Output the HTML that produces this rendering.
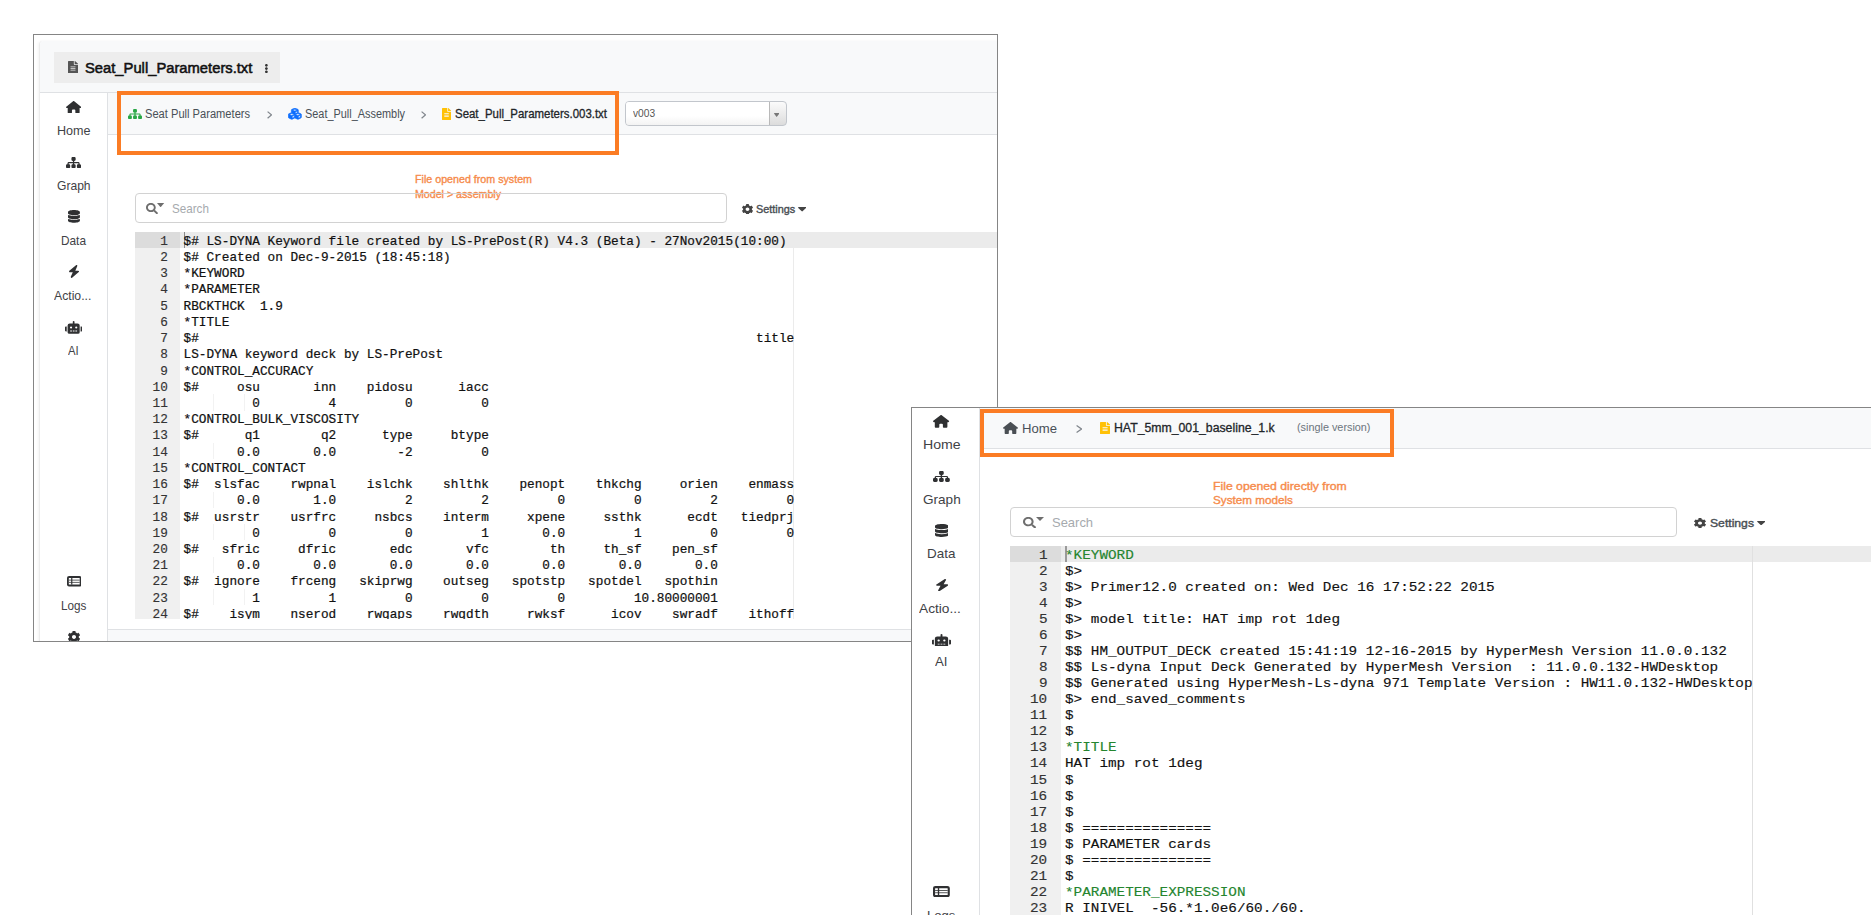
<!DOCTYPE html>
<html lang="en"><head><meta charset="utf-8"><title>File viewer breadcrumbs</title>
<style>
html,body{margin:0;padding:0;background:#fff}
body{position:relative;width:1871px;height:915px;overflow:hidden;font-kerning:none;-webkit-font-smoothing:antialiased}
body div,body svg,body span.t{position:absolute;display:block;box-sizing:border-box}
span.t{white-space:pre;transform-origin:0 50%}
.clip{overflow:hidden}
</style></head><body>
<div style="left:33px;top:34px;width:965px;height:608px;border:1px solid #858585;background:#fff"></div>
<div class="clip" style="left:34px;top:35px;width:963px;height:606px;">
<div style="left:5px;top:6px;width:961px;height:601px;background:#fff;box-shadow:-1px 0 3px rgba(0,0,0,.05);border-radius:4px 0 0 0;border-left:1px solid #ebebeb"></div>
<div style="left:6px;top:6px;width:960px;height:51px;background:#f8f9fa;border-radius:4px 0 0 0"></div>
<div style="left:6px;top:57px;width:960px;height:1px;background:#dfe1e4"></div>
<div style="left:20px;top:17px;width:226px;height:31px;background:#ededed"></div>
<svg style="left:33.8px;top:25.8px;" width="10" height="12.6" viewBox="0 0 384 512" preserveAspectRatio="none"><path fill="#555" d="M224 136V0H24C10.7 0 0 10.7 0 24v464c0 13.3 10.7 24 24 24h336c13.3 0 24-10.700 24-24V160H248c-13.200 0-24-10.800-24-24zm64 236c0 6.600-5.400 12-12 12H108c-6.600 0-12-5.400-12-12v-8c0-6.600 5.400-12 12-12h168c6.600 0 12 5.400 12 12v8zm0-64c0 6.600-5.400 12-12 12H108c-6.600 0-12-5.400-12-12v-8c0-6.600 5.400-12 12-12h168c6.600 0 12 5.400 12 12v8zm0-72v8c0 6.600-5.400 12-12 12H108c-6.600 0-12-5.400-12-12v-8c0-6.600 5.400-12 12-12h168c6.600 0 12 5.400 12 12zm96-114.100v6.100H256V0h6.100c6.400 0 12.500 2.500 17 7l97.900 98c4.500 4.500 7 10.600 7 16.900z"/></svg>
<span class="t" style="left:50.70px;top:23px;font:15.2px/20px 'Liberation Sans',sans-serif;color:#111;transform:scaleX(0.9718);-webkit-text-stroke:.55px #111;">Seat_Pull_Parameters.txt</span>
<svg style="left:230.9px;top:29.2px;" width="2.8" height="9.2" viewBox="24 8 144 496" preserveAspectRatio="none"><path fill="#333" d="M96 184c39.800 0 72 32.200 72 72s-32.200 72-72 72-72-32.200-72-72 32.200-72 72-72zM24 80c0 39.800 32.200 72 72 72s72-32.200 72-72S135.800 8 96 8 24 40.200 24 80zm0 352c0 39.800 32.200 72 72 72s72-32.200 72-72-32.200-72-72-72-72 32.200-72 72z"/></svg>
<div style="left:6px;top:58px;width:67px;height:549px;background:#fff"></div>
<div style="left:73px;top:58px;width:1px;height:549px;background:#dfe1e4"></div>
<svg style="left:31.9px;top:65.6px;" width="15.3" height="12.5" viewBox="0 0 576 512" preserveAspectRatio="none"><path fill="#2f3032" d="M575.8 255.5c0 18-15 32.1-32 32.1h-32l.7 160.2c0 2.7-.2 5.4-.5 8.100V472c0 22.100-17.900 40-40 40H456c-1.100 0-2.200 0-3.300-.100c-1.400 .100-2.800 .100-4.200 .100H416 392c-22.100 0-40-17.900-40-40V448 384c0-17.700-14.300-32-32-32H256c-17.700 0-32 14.300-32 32v64 24c0 22.100-17.900 40-40 40H160 128.100c-1.500 0-3-.100-4.500-.200c-1.200 .100-2.400 .200-3.600 .200H104c-22.100 0-40-17.900-40-40V360c0-.900 0-1.900 .100-2.800V287.600H32c-18 0-32-14-32-32.100c0-9 3-17 10-24L266.400 8c7-7 15-8 22-8s15 2 21 7L564.800 231.500c8 7 12 15 11 24z"/></svg>
<span class="t" style="left:22.70px;top:86px;font:13px/20px 'Liberation Sans',sans-serif;color:#3f4246;transform:scaleX(0.9680);">Home</span>
<svg style="left:31.9px;top:121.6px;" width="15.1" height="11.3" viewBox="0 32 576 448" preserveAspectRatio="none"><path fill="#2f3032" d="M208 80c0-26.5 21.5-48 48-48h64c26.5 0 48 21.5 48 48v64c0 26.500-21.500 48-48 48h-8v40H464c30.900 0 56 25.100 56 56v32h8c26.500 0 48 21.500 48 48v64c0 26.500-21.500 48-48 48H464c-26.500 0-48-21.500-48-48V368c0-26.500 21.500-48 48-48h8V288c0-4.400-3.600-8-8-8H312v40h8c26.500 0 48 21.500 48 48v64c0 26.500-21.500 48-48 48H256c-26.500 0-48-21.500-48-48V368c0-26.500 21.500-48 48-48h8V280H112c-4.400 0-8 3.600-8 8v32h8c26.500 0 48 21.500 48 48v64c0 26.500-21.500 48-48 48H48c-26.500 0-48-21.500-48-48V368c0-26.500 21.500-48 48-48h8V288c0-30.900 25.100-56 56-56H264V192h-8c-26.500 0-48-21.500-48-48V80z"/></svg>
<span class="t" style="left:22.70px;top:141px;font:13px/20px 'Liberation Sans',sans-serif;color:#3f4246;transform:scaleX(0.9297);">Graph</span>
<svg style="left:33.7px;top:174.9px;" width="11.9" height="12.8" viewBox="0 0 448 512" preserveAspectRatio="none"><path fill="#2f3032" d="M448 80v48c0 44.2-100.3 80-224 80S0 172.2 0 128V80C0 35.8 100.3 0 224 0S448 35.800 448 80zM393.200 214.700c20.800-7.400 39.900-16.900 54.800-28.600V288c0 44.200-100.300 80-224 80S0 332.200 0 288V186.100c14.900 11.800 34 21.200 54.800 28.600C99.700 230.700 159.500 240 224 240s124.300-9.300 169.200-25.300zM0 346.100c14.900 11.800 34 21.200 54.800 28.600C99.700 390.700 159.500 400 224 400s124.300-9.300 169.200-25.300c20.800-7.400 39.900-16.900 54.800-28.600V432c0 44.200-100.300 80-224 80S0 476.200 0 432V346.100z"/></svg>
<span class="t" style="left:27.00px;top:196px;font:13px/20px 'Liberation Sans',sans-serif;color:#3f4246;transform:scaleX(0.9093);">Data</span>
<svg style="left:34.7px;top:230.4px;" width="10.1" height="12.9" viewBox="30 0 388 512" preserveAspectRatio="none"><path fill="#2f3032" d="M349.4 44.6c5.9-13.7 1.5-29.7-10.6-38.5s-28.600-8-39.900 1.800l-256 224c-10 8.800-13.600 22.900-8.900 35.300S50.700 288 64 288H175.500L98.600 467.400c-5.900 13.700-1.500 29.700 10.600 38.500s28.600 8 39.900-1.800l256-224c10-8.800 13.600-22.900 8.900-35.300s-16.600-20.700-30-20.700H272.500L349.400 44.600z"/></svg>
<span class="t" style="left:20.05px;top:251px;font:13px/20px 'Liberation Sans',sans-serif;color:#3f4246;transform:scaleX(0.9392);">Actio...</span>
<svg style="left:31px;top:285.8px;" width="17.3" height="12.8" viewBox="0 0 640 512" preserveAspectRatio="none"><path fill="#2f3032" d="M32,224H64V416H32A31.962,31.962,0,0,1,0,384V256A31.962,31.962,0,0,1,32,224Zm512-48V448a64.063,64.063,0,0,1-64,64H160a64.063,64.063,0,0,1-64-64V176a79.974,79.974,0,0,1,80-80H288V32a32,32,0,0,1,64,0V96H464A79.974,79.974,0,0,1,544,176ZM264,256a40,40,0,1,0-40,40A39.997,39.997,0,0,0,264,256Zm-8,128H192v32h64Zm96,0H288v32h64ZM456,256a40,40,0,1,0-40,40A39.997,39.997,0,0,0,456,256Zm-8,128H384v32h64ZM640,256V384a31.962,31.962,0,0,1-32,32H576V224h32A31.962,31.962,0,0,1,640,256Z"/></svg>
<span class="t" style="left:34.00px;top:306px;font:13px/20px 'Liberation Sans',sans-serif;color:#3f4246;transform:scaleX(0.8710);">AI</span>
<svg style="left:32.5px;top:541.4px" width="14.5" height="10.4" viewBox="0 0 32 24" preserveAspectRatio="none"><rect x="0" y="0" width="32" height="24" rx="4.5" fill="#2f3032"/><rect x="4" y="4.6" width="24" height="14.8" rx="0.6" fill="#fff"/><g fill="#2f3032"><rect x="9.2" y="4" width="2.6" height="16"/><rect x="4" y="8.6" width="24" height="1.7"/><rect x="4" y="13.7" width="24" height="1.700"/></g></svg>
<span class="t" style="left:26.80px;top:561px;font:13px/20px 'Liberation Sans',sans-serif;color:#3f4246;transform:scaleX(0.9004);">Logs</span>
<svg style="left:33.6px;top:595.8px;" width="12" height="12" viewBox="19 8 474 496" preserveAspectRatio="none"><path fill="#2f3032" d="M487.4 315.7l-42.6-24.6c4.3-23.2 4.3-47 0-70.2l42.6-24.6c4.9-2.8 7.1-8.6 5.5-14-11.1-35.6-30-67.8-54.700-94.600-3.800-4.100-10-5.100-14.800-2.300L380.800 110c-17.900-15.400-38.500-27.300-60.800-35.100V25.800c0-5.600-3.900-10.500-9.400-11.700-36.700-8.200-74.300-7.800-109.200 0-5.500 1.200-9.400 6.100-9.400 11.700V75c-22.200 7.900-42.800 19.800-60.800 35.100L88.700 85.500c-4.900-2.800-11-1.900-14.800 2.300-24.700 26.700-43.600 58.900-54.700 94.600-1.700 5.400.6 11.200 5.500 14L67.300 221c-4.300 23.200-4.300 47 0 70.200l-42.6 24.600c-4.900 2.800-7.100 8.600-5.500 14 11.100 35.600 30 67.800 54.700 94.600 3.800 4.100 10 5.100 14.800 2.300l42.600-24.600c17.900 15.400 38.500 27.300 60.800 35.100v49.200c0 5.600 3.900 10.500 9.400 11.700 36.700 8.200 74.300 7.800 109.200 0 5.500-1.200 9.400-6.100 9.400-11.700v-49.200c22.200-7.900 42.800-19.800 60.800-35.100l42.600 24.600c4.900 2.800 11 1.900 14.800-2.300 24.700-26.700 43.600-58.900 54.700-94.600 1.500-5.500-.7-11.300-5.600-14.100zM256 336c-44.100 0-80-35.900-80-80s35.900-80 80-80 80 35.900 80 80-35.900 80-80 80z"/></svg>
<div style="left:74px;top:58px;width:892px;height:41px;background:#f8f9fa"></div>
<div style="left:74px;top:99px;width:892px;height:1px;background:#dfe1e4"></div>
<svg style="left:94.1px;top:73.6px;" width="14" height="10" viewBox="0 32 576 448" preserveAspectRatio="none"><path fill="#28a745" d="M208 80c0-26.5 21.5-48 48-48h64c26.5 0 48 21.5 48 48v64c0 26.500-21.500 48-48 48h-8v40H464c30.900 0 56 25.100 56 56v32h8c26.500 0 48 21.500 48 48v64c0 26.500-21.500 48-48 48H464c-26.500 0-48-21.500-48-48V368c0-26.500 21.500-48 48-48h8V288c0-4.400-3.600-8-8-8H312v40h8c26.500 0 48 21.500 48 48v64c0 26.500-21.500 48-48 48H256c-26.500 0-48-21.500-48-48V368c0-26.500 21.500-48 48-48h8V280H112c-4.400 0-8 3.600-8 8v32h8c26.500 0 48 21.500 48 48v64c0 26.500-21.500 48-48 48H48c-26.500 0-48-21.500-48-48V368c0-26.500 21.500-48 48-48h8V288c0-30.900 25.100-56 56-56H264V192h-8c-26.500 0-48-21.500-48-48V80z"/></svg>
<span class="t" style="left:111.10px;top:69px;font:12.5px/20px 'Liberation Sans',sans-serif;color:#495057;transform:scaleX(0.8897);">Seat Pull Parameters</span>
<svg style="left:233px;top:76px" width="5.2" height="7.8" viewBox="0 0 5.2 7.8"><polyline points="0.6,0.6 4.4,3.9 0.6,7.2" fill="none" stroke="#80868c" stroke-width="1.25"/></svg>
<svg style="left:254.3px;top:73px;" width="13.7" height="11.6" viewBox="-13 19 538 474" preserveAspectRatio="none"><path fill="#0d6efd" stroke="#0d6efd" stroke-width="26" stroke-linejoin="round" d="M488.6 250.2L392 214V105.5c0-15-9.300-28.400-23.400-33.700l-100-37.500c-8.100-3.100-17.100-3.100-25.300 0l-100 37.500c-14.100 5.300-23.400 18.700-23.400 33.700V214l-96.600 36.200C9.300 255.500 0 268.900 0 283.900V394c0 13.600 7.700 26.100 19.900 32.200l100 50c10.100 5.100 22.100 5.100 32.200 0l103.900-52 103.900 52c10.100 5.100 22.100 5.100 32.200 0l100-50c12.200-6.100 19.900-18.600 19.900-32.200V283.900c0-15-9.300-28.400-23.400-33.700zM358 214.800l-85 31.900v-68.200l85-37v73.300zM154 104.100l102-38.200 102 38.200v.6l-102 41.400-102-41.400v-.6zm84 291.100l-85 42.500v-79.100l85-38.800v75.400zm0-112l-102 41.400-102-41.400v-.6l102-38.200 102 38.200v.6zm240 112l-85 42.500v-79.100l85-38.800v75.400zm0-112l-102 41.400-102-41.400v-.6l102-38.200 102 38.200v.6z"/></svg>
<span class="t" style="left:270.70px;top:69px;font:12.5px/20px 'Liberation Sans',sans-serif;color:#495057;transform:scaleX(0.8724);">Seat_Pull_Assembly</span>
<svg style="left:387.2px;top:76px" width="5.2" height="7.8" viewBox="0 0 5.2 7.8"><polyline points="0.6,0.6 4.4,3.9 0.6,7.2" fill="none" stroke="#80868c" stroke-width="1.25"/></svg>
<svg style="left:408.3px;top:72.7px;" width="9.1" height="12.1" viewBox="0 0 384 512" preserveAspectRatio="none"><path fill="#ffc107" d="M224 136V0H24C10.7 0 0 10.7 0 24v464c0 13.3 10.7 24 24 24h336c13.3 0 24-10.700 24-24V160H248c-13.200 0-24-10.800-24-24zm64 236c0 6.600-5.400 12-12 12H108c-6.600 0-12-5.400-12-12v-8c0-6.600 5.400-12 12-12h168c6.600 0 12 5.400 12 12v8zm0-64c0 6.600-5.400 12-12 12H108c-6.600 0-12-5.400-12-12v-8c0-6.600 5.400-12 12-12h168c6.600 0 12 5.400 12 12v8zm0-72v8c0 6.600-5.400 12-12 12H108c-6.600 0-12-5.400-12-12v-8c0-6.600 5.400-12 12-12h168c6.600 0 12 5.400 12 12zm96-114.100v6.100H256V0h6.100c6.400 0 12.500 2.500 17 7l97.900 98c4.500 4.500 7 10.600 7 16.900z"/></svg>
<span class="t" style="left:420.50px;top:69px;font:12.5px/20px 'Liberation Sans',sans-serif;color:#212529;transform:scaleX(0.9153);-webkit-text-stroke:.3px #212529;">Seat_Pull_Parameters.003.txt</span>
<div style="left:591px;top:66.4px;width:162px;height:24.6px;border:1px solid #c2c6cc;border-radius:4px;background:linear-gradient(#fbfbfb,#dcdcdc)"></div>
<div style="left:592px;top:67.4px;width:143px;height:22.6px;background:linear-gradient(#fff 60%,#f3f3f3);border-radius:3px 0 0 3px"></div>
<div style="left:734.5px;top:67.4px;width:1px;height:22.6px;background:#b9b9b9"></div>
<span class="t" style="left:599.30px;top:68px;font:11.5px/20px 'Liberation Sans',sans-serif;color:#555;transform:scaleX(0.8856);">v003</span>
<svg style="left:740.1px;top:78.4px;" width="5.3" height="4" viewBox="8 192 304 169" preserveAspectRatio="none"><path fill="#777" d="M31.3 192h257.300c17.800 0 26.700 21.500 14.100 34.100L174.100 354.800c-7.800 7.800-20.500 7.800-28.300 0L17.200 226.100C4.600 213.500 13.500 192 31.300 192z"/></svg>
<span class="t" style="left:381.30px;top:134px;font:10.5px/20px 'Liberation Sans',sans-serif;color:#f68b4b;transform:scaleX(1.0176);-webkit-text-stroke:.35px #f68b4b;">File opened from system</span>
<span class="t" style="left:381.30px;top:149px;font:10.5px/20px 'Liberation Sans',sans-serif;color:#f68b4b;transform:scaleX(1.0130);-webkit-text-stroke:.35px #f68b4b;">Model &gt; assembly</span>
<div style="left:101px;top:158px;width:592px;height:30px;border:1px solid #d2d2d2;border-radius:4px;background:transparent"></div>
<svg style="left:112px;top:167.8px;" width="12" height="11.2" viewBox="0 0 512 512" preserveAspectRatio="none"><path fill="#6e6e6e" d="M505 442.7L405.3 343c-4.500-4.500-10.600-7-17-7H372c27.600-35.300 44-79.700 44-128C416 93.100 322.900 0 208 0S0 93.100 0 208s93.100 208 208 208c48.300 0 92.700-16.400 128-44v16.300c0 6.400 2.500 12.500 7 17l99.700 99.700c9.400 9.400 24.600 9.400 33.900 0l28.300-28.300c9.400-9.400 9.400-24.600.1-34zM208 336c-70.700 0-128-57.200-128-128 0-70.700 57.200-128 128-128 70.700 0 128 57.200 128 128 0 70.700-57.200 128-128 128z"/></svg>
<svg style="left:123.4px;top:168px;" width="7.2" height="4.3" viewBox="0 0 10 6" preserveAspectRatio="none"><path fill="#6e6e6e" d="M0 0H10L5 6z"/></svg>
<span class="t" style="left:137.90px;top:164px;font:13px/20px 'Liberation Sans',sans-serif;color:#a6aaae;transform:scaleX(0.8954);">Search</span>
<svg style="left:707.6px;top:168.6px;" width="11" height="10.6" viewBox="19 8 474 496" preserveAspectRatio="none"><path fill="#444" d="M487.4 315.7l-42.6-24.6c4.3-23.2 4.3-47 0-70.2l42.6-24.6c4.9-2.8 7.1-8.6 5.5-14-11.1-35.6-30-67.8-54.700-94.600-3.800-4.100-10-5.100-14.800-2.300L380.800 110c-17.900-15.400-38.500-27.300-60.800-35.100V25.800c0-5.600-3.900-10.500-9.400-11.700-36.700-8.200-74.300-7.800-109.200 0-5.500 1.200-9.400 6.100-9.400 11.700V75c-22.200 7.900-42.800 19.800-60.800 35.100L88.700 85.500c-4.900-2.800-11-1.900-14.800 2.300-24.700 26.700-43.600 58.900-54.700 94.600-1.700 5.400.6 11.200 5.500 14L67.300 221c-4.300 23.200-4.300 47 0 70.200l-42.6 24.600c-4.900 2.800-7.100 8.600-5.500 14 11.100 35.600 30 67.800 54.700 94.600 3.800 4.100 10 5.100 14.800 2.300l42.600-24.600c17.900 15.400 38.500 27.300 60.800 35.100v49.200c0 5.600 3.900 10.500 9.400 11.700 36.700 8.200 74.300 7.800 109.200 0 5.500-1.200 9.400-6.100 9.400-11.700v-49.200c22.200-7.900 42.800-19.800 60.800-35.100l42.600 24.600c4.900 2.800 11 1.900 14.800-2.300 24.700-26.700 43.600-58.900 54.700-94.600 1.500-5.500-.7-11.300-5.600-14.100zM256 336c-44.100 0-80-35.900-80-80s35.900-80 80-80 80 35.900 80 80-35.900 80-80 80z"/></svg>
<span class="t" style="left:721.80px;top:164px;font:11px/20px 'Liberation Sans',sans-serif;color:#4a4f54;transform:scaleX(0.9858);-webkit-text-stroke:.4px #4a4f54;">Settings</span>
<svg style="left:763.5px;top:172px;" width="8.3" height="4.5" viewBox="8 192 304 169" preserveAspectRatio="none"><path fill="#444" d="M31.3 192h257.300c17.800 0 26.700 21.500 14.100 34.100L174.100 354.800c-7.800 7.800-20.500 7.800-28.300 0L17.200 226.100C4.600 213.500 13.500 192 31.300 192z"/></svg>
<div class="clip" style="left:101px;top:197px;width:865px;height:386.5px;">
<div style="left:0px;top:0px;width:44.5px;height:400px;background:#f0f0f0"></div>
<div style="left:0px;top:0.2px;width:44.5px;height:16.22px;background:#dcdcdc"></div>
<div style="left:44.5px;top:0.2px;width:820px;height:16.22px;background:#ebebeb"></div>
<div style="left:658px;top:0px;width:1px;height:400px;background:#ebebeb"></div>
<div style="left:49px;top:0.2px;width:1px;height:16.22px;background:#8a8a8a"></div>
<span class="t" style="left:25.16px;top:0px;font:12.7292px/20px 'Liberation Mono',monospace;color:#333;-webkit-text-stroke:.15px #333;">1</span>
<span class="t" style="left:48.60px;top:0px;font:12.7292px/20px 'Liberation Mono',monospace;color:#111;-webkit-text-stroke:.22px #111;">$# LS-DYNA Keyword file created by LS-PrePost(R) V4.3 (Beta) - 27Nov2015(10:00)</span>
<span class="t" style="left:25.16px;top:16px;font:12.7292px/20px 'Liberation Mono',monospace;color:#333;-webkit-text-stroke:.15px #333;">2</span>
<span class="t" style="left:48.60px;top:16px;font:12.7292px/20px 'Liberation Mono',monospace;color:#111;-webkit-text-stroke:.22px #111;">$# Created on Dec-9-2015 (18:45:18)</span>
<span class="t" style="left:25.16px;top:32px;font:12.7292px/20px 'Liberation Mono',monospace;color:#333;-webkit-text-stroke:.15px #333;">3</span>
<span class="t" style="left:48.60px;top:32px;font:12.7292px/20px 'Liberation Mono',monospace;color:#111;-webkit-text-stroke:.22px #111;">*KEYWORD</span>
<span class="t" style="left:25.16px;top:48px;font:12.7292px/20px 'Liberation Mono',monospace;color:#333;-webkit-text-stroke:.15px #333;">4</span>
<span class="t" style="left:48.60px;top:48px;font:12.7292px/20px 'Liberation Mono',monospace;color:#111;-webkit-text-stroke:.22px #111;">*PARAMETER</span>
<span class="t" style="left:25.16px;top:65px;font:12.7292px/20px 'Liberation Mono',monospace;color:#333;-webkit-text-stroke:.15px #333;">5</span>
<span class="t" style="left:48.60px;top:65px;font:12.7292px/20px 'Liberation Mono',monospace;color:#111;-webkit-text-stroke:.22px #111;">RBCKTHCK  1.9</span>
<span class="t" style="left:25.16px;top:81px;font:12.7292px/20px 'Liberation Mono',monospace;color:#333;-webkit-text-stroke:.15px #333;">6</span>
<span class="t" style="left:48.60px;top:81px;font:12.7292px/20px 'Liberation Mono',monospace;color:#111;-webkit-text-stroke:.22px #111;">*TITLE</span>
<span class="t" style="left:25.16px;top:97px;font:12.7292px/20px 'Liberation Mono',monospace;color:#333;-webkit-text-stroke:.15px #333;">7</span>
<span class="t" style="left:48.60px;top:97px;font:12.7292px/20px 'Liberation Mono',monospace;color:#111;-webkit-text-stroke:.22px #111;">$#                                                                         title</span>
<span class="t" style="left:25.16px;top:113px;font:12.7292px/20px 'Liberation Mono',monospace;color:#333;-webkit-text-stroke:.15px #333;">8</span>
<span class="t" style="left:48.60px;top:113px;font:12.7292px/20px 'Liberation Mono',monospace;color:#111;-webkit-text-stroke:.22px #111;">LS-DYNA keyword deck by LS-PrePost</span>
<span class="t" style="left:25.16px;top:130px;font:12.7292px/20px 'Liberation Mono',monospace;color:#333;-webkit-text-stroke:.15px #333;">9</span>
<span class="t" style="left:48.60px;top:130px;font:12.7292px/20px 'Liberation Mono',monospace;color:#111;-webkit-text-stroke:.22px #111;">*CONTROL_ACCURACY</span>
<span class="t" style="left:17.52px;top:146px;font:12.7292px/20px 'Liberation Mono',monospace;color:#333;-webkit-text-stroke:.15px #333;">10</span>
<span class="t" style="left:48.60px;top:146px;font:12.7292px/20px 'Liberation Mono',monospace;color:#111;-webkit-text-stroke:.22px #111;">$#     osu       inn    pidosu      iacc</span>
<span class="t" style="left:17.52px;top:162px;font:12.7292px/20px 'Liberation Mono',monospace;color:#333;-webkit-text-stroke:.15px #333;">11</span>
<span class="t" style="left:48.60px;top:162px;font:12.7292px/20px 'Liberation Mono',monospace;color:#111;-webkit-text-stroke:.22px #111;">         0         4         0         0</span>
<div style="left:78.15px;top:162.4px;width:1px;height:16.22px;background:#f2f2f2"></div>
<div style="left:108.7px;top:162.4px;width:1px;height:16.22px;background:#f2f2f2"></div>
<span class="t" style="left:17.52px;top:178px;font:12.7292px/20px 'Liberation Mono',monospace;color:#333;-webkit-text-stroke:.15px #333;">12</span>
<span class="t" style="left:48.60px;top:178px;font:12.7292px/20px 'Liberation Mono',monospace;color:#111;-webkit-text-stroke:.22px #111;">*CONTROL_BULK_VISCOSITY</span>
<span class="t" style="left:17.52px;top:194px;font:12.7292px/20px 'Liberation Mono',monospace;color:#333;-webkit-text-stroke:.15px #333;">13</span>
<span class="t" style="left:48.60px;top:194px;font:12.7292px/20px 'Liberation Mono',monospace;color:#111;-webkit-text-stroke:.22px #111;">$#      q1        q2      type     btype</span>
<span class="t" style="left:17.52px;top:211px;font:12.7292px/20px 'Liberation Mono',monospace;color:#333;-webkit-text-stroke:.15px #333;">14</span>
<span class="t" style="left:48.60px;top:211px;font:12.7292px/20px 'Liberation Mono',monospace;color:#111;-webkit-text-stroke:.22px #111;">       0.0       0.0        -2         0</span>
<div style="left:78.15px;top:211.06px;width:1px;height:16.22px;background:#f2f2f2"></div>
<span class="t" style="left:17.52px;top:227px;font:12.7292px/20px 'Liberation Mono',monospace;color:#333;-webkit-text-stroke:.15px #333;">15</span>
<span class="t" style="left:48.60px;top:227px;font:12.7292px/20px 'Liberation Mono',monospace;color:#111;-webkit-text-stroke:.22px #111;">*CONTROL_CONTACT</span>
<span class="t" style="left:17.52px;top:243px;font:12.7292px/20px 'Liberation Mono',monospace;color:#333;-webkit-text-stroke:.15px #333;">16</span>
<span class="t" style="left:48.60px;top:243px;font:12.7292px/20px 'Liberation Mono',monospace;color:#111;-webkit-text-stroke:.22px #111;">$#  slsfac    rwpnal    islchk    shlthk    penopt    thkchg     orien    enmass</span>
<span class="t" style="left:17.52px;top:259px;font:12.7292px/20px 'Liberation Mono',monospace;color:#333;-webkit-text-stroke:.15px #333;">17</span>
<span class="t" style="left:48.60px;top:259px;font:12.7292px/20px 'Liberation Mono',monospace;color:#111;-webkit-text-stroke:.22px #111;">       0.0       1.0         2         2         0         0         2         0</span>
<div style="left:78.15px;top:259.72px;width:1px;height:16.22px;background:#f2f2f2"></div>
<span class="t" style="left:17.52px;top:276px;font:12.7292px/20px 'Liberation Mono',monospace;color:#333;-webkit-text-stroke:.15px #333;">18</span>
<span class="t" style="left:48.60px;top:276px;font:12.7292px/20px 'Liberation Mono',monospace;color:#111;-webkit-text-stroke:.22px #111;">$#  usrstr    usrfrc     nsbcs    interm     xpene     ssthk      ecdt   tiedprj</span>
<span class="t" style="left:17.52px;top:292px;font:12.7292px/20px 'Liberation Mono',monospace;color:#333;-webkit-text-stroke:.15px #333;">19</span>
<span class="t" style="left:48.60px;top:292px;font:12.7292px/20px 'Liberation Mono',monospace;color:#111;-webkit-text-stroke:.22px #111;">         0         0         0         1       0.0         1         0         0</span>
<div style="left:78.15px;top:292.16px;width:1px;height:16.22px;background:#f2f2f2"></div>
<div style="left:108.7px;top:292.16px;width:1px;height:16.22px;background:#f2f2f2"></div>
<span class="t" style="left:17.52px;top:308px;font:12.7292px/20px 'Liberation Mono',monospace;color:#333;-webkit-text-stroke:.15px #333;">20</span>
<span class="t" style="left:48.60px;top:308px;font:12.7292px/20px 'Liberation Mono',monospace;color:#111;-webkit-text-stroke:.22px #111;">$#   sfric     dfric       edc       vfc        th     th_sf    pen_sf</span>
<span class="t" style="left:17.52px;top:324px;font:12.7292px/20px 'Liberation Mono',monospace;color:#333;-webkit-text-stroke:.15px #333;">21</span>
<span class="t" style="left:48.60px;top:324px;font:12.7292px/20px 'Liberation Mono',monospace;color:#111;-webkit-text-stroke:.22px #111;">       0.0       0.0       0.0       0.0       0.0       0.0       0.0</span>
<div style="left:78.15px;top:324.6px;width:1px;height:16.22px;background:#f2f2f2"></div>
<span class="t" style="left:17.52px;top:340px;font:12.7292px/20px 'Liberation Mono',monospace;color:#333;-webkit-text-stroke:.15px #333;">22</span>
<span class="t" style="left:48.60px;top:340px;font:12.7292px/20px 'Liberation Mono',monospace;color:#111;-webkit-text-stroke:.22px #111;">$#  ignore    frceng   skiprwg    outseg   spotstp   spotdel   spothin</span>
<span class="t" style="left:17.52px;top:357px;font:12.7292px/20px 'Liberation Mono',monospace;color:#333;-webkit-text-stroke:.15px #333;">23</span>
<span class="t" style="left:48.60px;top:357px;font:12.7292px/20px 'Liberation Mono',monospace;color:#111;-webkit-text-stroke:.22px #111;">         1         1         0         0         0         10.80000001</span>
<div style="left:78.15px;top:357.04px;width:1px;height:16.22px;background:#f2f2f2"></div>
<div style="left:108.7px;top:357.04px;width:1px;height:16.22px;background:#f2f2f2"></div>
<span class="t" style="left:17.52px;top:373px;font:12.7292px/20px 'Liberation Mono',monospace;color:#333;-webkit-text-stroke:.15px #333;">24</span>
<span class="t" style="left:48.60px;top:373px;font:12.7292px/20px 'Liberation Mono',monospace;color:#111;-webkit-text-stroke:.22px #111;">$#    isym    nserod    rwgaps    rwgdth     rwksf      icov    swradf    ithoff</span>
</div>
<div style="left:74px;top:594px;width:892px;height:1px;background:#dfe1e4"></div>
<div style="left:74px;top:595px;width:892px;height:12px;background:#f8f9fa"></div>
<div style="left:83px;top:56px;width:502px;height:64px;border:4px solid #fb7c24"></div>
</div>
<div class="clip" style="left:911px;top:407px;width:960px;height:508px;background:#fff">
<div style="left:0px;top:0px;width:960px;height:1px;background:#858585"></div>
<div style="left:0px;top:0px;width:1px;height:508px;background:#858585"></div>
<div style="left:68px;top:1px;width:1px;height:507px;background:#dfe1e4"></div>
<svg style="left:22.4px;top:8px;" width="16.2" height="12.7" viewBox="0 0 576 512" preserveAspectRatio="none"><path fill="#2f3032" d="M575.8 255.5c0 18-15 32.1-32 32.1h-32l.7 160.2c0 2.7-.2 5.4-.5 8.100V472c0 22.100-17.900 40-40 40H456c-1.100 0-2.200 0-3.300-.100c-1.400 .100-2.800 .100-4.200 .100H416 392c-22.100 0-40-17.900-40-40V448 384c0-17.700-14.300-32-32-32H256c-17.700 0-32 14.300-32 32v64 24c0 22.100-17.900 40-40 40H160 128.100c-1.500 0-3-.100-4.500-.200c-1.200 .100-2.400 .200-3.600 .200H104c-22.100 0-40-17.900-40-40V360c0-.900 0-1.900 .100-2.800V287.600H32c-18 0-32-14-32-32.100c0-9 3-17 10-24L266.400 8c7-7 15-8 22-8s15 2 21 7L564.800 231.500c8 7 12 15 11 24z"/></svg>
<span class="t" style="left:11.65px;top:28px;font:13px/20px 'Liberation Sans',sans-serif;color:#3f4246;transform:scaleX(1.0861);">Home</span>
<svg style="left:21.8px;top:63.8px;" width="16.8" height="11" viewBox="0 32 576 448" preserveAspectRatio="none"><path fill="#2f3032" d="M208 80c0-26.5 21.5-48 48-48h64c26.5 0 48 21.5 48 48v64c0 26.500-21.500 48-48 48h-8v40H464c30.900 0 56 25.100 56 56v32h8c26.500 0 48 21.500 48 48v64c0 26.500-21.500 48-48 48H464c-26.500 0-48-21.500-48-48V368c0-26.500 21.500-48 48-48h8V288c0-4.400-3.600-8-8-8H312v40h8c26.500 0 48 21.500 48 48v64c0 26.500-21.500 48-48 48H256c-26.500 0-48-21.500-48-48V368c0-26.500 21.500-48 48-48h8V280H112c-4.400 0-8 3.600-8 8v32h8c26.500 0 48 21.500 48 48v64c0 26.500-21.500 48-48 48H48c-26.500 0-48-21.500-48-48V368c0-26.500 21.500-48 48-48h8V288c0-30.900 25.100-56 56-56H264V192h-8c-26.500 0-48-21.500-48-48V80z"/></svg>
<span class="t" style="left:11.65px;top:83px;font:13px/20px 'Liberation Sans',sans-serif;color:#3f4246;transform:scaleX(1.0432);">Graph</span>
<svg style="left:23.7px;top:117.1px;" width="13.6" height="13" viewBox="0 0 448 512" preserveAspectRatio="none"><path fill="#2f3032" d="M448 80v48c0 44.2-100.3 80-224 80S0 172.2 0 128V80C0 35.8 100.3 0 224 0S448 35.800 448 80zM393.200 214.700c20.800-7.400 39.900-16.900 54.800-28.600V288c0 44.200-100.300 80-224 80S0 332.200 0 288V186.100c14.900 11.800 34 21.200 54.800 28.600C99.700 230.700 159.500 240 224 240s124.300-9.300 169.200-25.300zM0 346.100c14.900 11.800 34 21.200 54.800 28.600C99.700 390.700 159.500 400 224 400s124.300-9.300 169.200-25.300c20.800-7.400 39.900-16.900 54.800-28.600V432c0 44.200-100.300 80-224 80S0 476.200 0 432V346.100z"/></svg>
<span class="t" style="left:16.30px;top:137px;font:13px/20px 'Liberation Sans',sans-serif;color:#3f4246;transform:scaleX(1.0329);">Data</span>
<svg style="left:24.5px;top:172px;" width="12.2" height="12.2" viewBox="30 0 388 512" preserveAspectRatio="none"><path fill="#2f3032" d="M349.4 44.6c5.9-13.7 1.5-29.7-10.6-38.5s-28.600-8-39.900 1.800l-256 224c-10 8.800-13.600 22.900-8.900 35.300S50.700 288 64 288H175.500L98.600 467.400c-5.900 13.700-1.500 29.700 10.600 38.500s28.600 8 39.900-1.800l256-224c10-8.800 13.600-22.900 8.900-35.300s-16.600-20.700-30-20.700H272.500L349.400 44.600z"/></svg>
<span class="t" style="left:8.40px;top:192px;font:13px/20px 'Liberation Sans',sans-serif;color:#3f4246;transform:scaleX(1.0525);">Actio...</span>
<svg style="left:20.8px;top:226.5px;" width="19" height="12.9" viewBox="0 0 640 512" preserveAspectRatio="none"><path fill="#2f3032" d="M32,224H64V416H32A31.962,31.962,0,0,1,0,384V256A31.962,31.962,0,0,1,32,224Zm512-48V448a64.063,64.063,0,0,1-64,64H160a64.063,64.063,0,0,1-64-64V176a79.974,79.974,0,0,1,80-80H288V32a32,32,0,0,1,64,0V96H464A79.974,79.974,0,0,1,544,176ZM264,256a40,40,0,1,0-40,40A39.997,39.997,0,0,0,264,256Zm-8,128H192v32h64Zm96,0H288v32h64ZM456,256a40,40,0,1,0-40,40A39.997,39.997,0,0,0,456,256Zm-8,128H384v32h64ZM640,256V384a31.962,31.962,0,0,1-32,32H576V224h32A31.962,31.962,0,0,1,640,256Z"/></svg>
<span class="t" style="left:24.25px;top:245px;font:13px/20px 'Liberation Sans',sans-serif;color:#3f4246;transform:scaleX(1.0175);">AI</span>
<svg style="left:22.2px;top:479px" width="16.8" height="11.2" viewBox="0 0 32 24" preserveAspectRatio="none"><rect x="0" y="0" width="32" height="24" rx="4.5" fill="#2f3032"/><rect x="4" y="4.6" width="24" height="14.8" rx="0.6" fill="#fff"/><g fill="#2f3032"><rect x="9.2" y="4" width="2.6" height="16"/><rect x="4" y="8.6" width="24" height="1.7"/><rect x="4" y="13.7" width="24" height="1.700"/></g></svg>
<span class="t" style="left:16.30px;top:499px;font:13px/20px 'Liberation Sans',sans-serif;color:#3f4246;transform:scaleX(1.0067);">Logs</span>
<div style="left:69px;top:1px;width:900px;height:40px;background:#f8f9fa"></div>
<div style="left:69px;top:41px;width:900px;height:1px;background:#dfe1e4"></div>
<svg style="left:92px;top:14.9px;" width="15" height="12.1" viewBox="0 0 576 512" preserveAspectRatio="none"><path fill="#4a4f54" d="M575.8 255.5c0 18-15 32.1-32 32.1h-32l.7 160.2c0 2.7-.2 5.4-.5 8.100V472c0 22.100-17.900 40-40 40H456c-1.100 0-2.200 0-3.300-.100c-1.400 .100-2.800 .100-4.200 .100H416 392c-22.100 0-40-17.900-40-40V448 384c0-17.700-14.300-32-32-32H256c-17.700 0-32 14.300-32 32v64 24c0 22.100-17.900 40-40 40H160 128.100c-1.500 0-3-.100-4.500-.200c-1.200 .100-2.400 .200-3.600 .200H104c-22.100 0-40-17.900-40-40V360c0-.900 0-1.900 .100-2.800V287.600H32c-18 0-32-14-32-32.100c0-9 3-17 10-24L266.400 8c7-7 15-8 22-8s15 2 21 7L564.800 231.500c8 7 12 15 11 24z"/></svg>
<span class="t" style="left:111.00px;top:12px;font:12.5px/20px 'Liberation Sans',sans-serif;color:#495057;transform:scaleX(1.0487);">Home</span>
<svg style="left:164.70000000000005px;top:18.399999999999977px" width="6.3" height="8" viewBox="0 0 6.3 8"><polyline points="0.6,0.6 5.5,4.0 0.6,7.4" fill="none" stroke="#80868c" stroke-width="1.25"/></svg>
<svg style="left:188.7px;top:15.2px;" width="10.2" height="12" viewBox="0 0 384 512" preserveAspectRatio="none"><path fill="#ffc107" d="M224 136V0H24C10.7 0 0 10.7 0 24v464c0 13.3 10.7 24 24 24h336c13.3 0 24-10.700 24-24V160H248c-13.200 0-24-10.800-24-24zm64 236c0 6.600-5.400 12-12 12H108c-6.600 0-12-5.400-12-12v-8c0-6.600 5.400-12 12-12h168c6.600 0 12 5.400 12 12v8zm0-64c0 6.600-5.400 12-12 12H108c-6.600 0-12-5.400-12-12v-8c0-6.600 5.400-12 12-12h168c6.600 0 12 5.400 12 12v8zm0-72v8c0 6.600-5.400 12-12 12H108c-6.600 0-12-5.400-12-12v-8c0-6.600 5.400-12 12-12h168c6.600 0 12 5.400 12 12zm96-114.100v6.100H256V0h6.100c6.400 0 12.500 2.500 17 7l97.900 98c4.500 4.500 7 10.600 7 16.900z"/></svg>
<span class="t" style="left:203.20px;top:11px;font:12.5px/20px 'Liberation Sans',sans-serif;color:#212529;transform:scaleX(0.9816);-webkit-text-stroke:.3px #212529;">HAT_5mm_001_baseline_1.k</span>
<span class="t" style="left:385.70px;top:11px;font:10.3px/20px 'Liberation Sans',sans-serif;color:#6c757d;transform:scaleX(1.0525);">(single version)</span>
<span class="t" style="left:301.60px;top:69px;font:10.5px/20px 'Liberation Sans',sans-serif;color:#f68b4b;transform:scaleX(1.1637);-webkit-text-stroke:.35px #f68b4b;">File opened directly from</span>
<span class="t" style="left:301.60px;top:83px;font:10.5px/20px 'Liberation Sans',sans-serif;color:#f68b4b;transform:scaleX(1.1133);-webkit-text-stroke:.35px #f68b4b;">System models</span>
<div style="left:99px;top:100px;width:667px;height:30px;border:1px solid #d2d2d2;border-radius:4px;background:transparent"></div>
<svg style="left:112px;top:110px;" width="13.1" height="11.4" viewBox="0 0 512 512" preserveAspectRatio="none"><path fill="#6e6e6e" d="M505 442.7L405.3 343c-4.500-4.500-10.600-7-17-7H372c27.600-35.300 44-79.700 44-128C416 93.100 322.900 0 208 0S0 93.100 0 208s93.100 208 208 208c48.300 0 92.700-16.400 128-44v16.300c0 6.400 2.500 12.500 7 17l99.700 99.700c9.400 9.400 24.600 9.400 33.900 0l28.300-28.300c9.400-9.400 9.400-24.600.1-34zM208 336c-70.700 0-128-57.200-128-128 0-70.700 57.200-128 128-128 70.700 0 128 57.200 128 128 0 70.700-57.200 128-128 128z"/></svg>
<svg style="left:124.7px;top:110.4px;" width="8" height="4" viewBox="0 0 10 6" preserveAspectRatio="none"><path fill="#6e6e6e" d="M0 0H10L5 6z"/></svg>
<span class="t" style="left:141.10px;top:106px;font:13px/20px 'Liberation Sans',sans-serif;color:#a6aaae;transform:scaleX(0.9973);">Search</span>
<svg style="left:782.7px;top:110.9px;" width="12" height="10.2" viewBox="19 8 474 496" preserveAspectRatio="none"><path fill="#444" d="M487.4 315.7l-42.6-24.6c4.3-23.2 4.3-47 0-70.2l42.6-24.6c4.9-2.8 7.1-8.6 5.5-14-11.1-35.6-30-67.8-54.700-94.600-3.800-4.100-10-5.100-14.800-2.300L380.800 110c-17.900-15.400-38.500-27.300-60.800-35.100V25.800c0-5.600-3.900-10.500-9.400-11.700-36.700-8.200-74.300-7.800-109.200 0-5.500 1.200-9.400 6.100-9.400 11.700V75c-22.200 7.900-42.800 19.800-60.800 35.100L88.700 85.500c-4.900-2.800-11-1.900-14.800 2.300-24.700 26.700-43.600 58.900-54.700 94.600-1.700 5.400.6 11.200 5.500 14L67.300 221c-4.300 23.200-4.300 47 0 70.200l-42.6 24.600c-4.900 2.800-7.100 8.600-5.500 14 11.100 35.600 30 67.800 54.700 94.600 3.800 4.100 10 5.100 14.800 2.300l42.600-24.600c17.900 15.400 38.500 27.300 60.800 35.100v49.200c0 5.600 3.900 10.500 9.400 11.700 36.700 8.200 74.300 7.800 109.200 0 5.500-1.200 9.400-6.100 9.400-11.700v-49.200c22.200-7.900 42.800-19.800 60.800-35.100l42.600 24.600c4.900 2.800 11 1.900 14.800-2.300 24.700-26.700 43.600-58.900 54.700-94.600 1.500-5.500-.7-11.300-5.600-14.100zM256 336c-44.100 0-80-35.900-80-80s35.900-80 80-80 80 35.900 80 80-35.900 80-80 80z"/></svg>
<span class="t" style="left:798.80px;top:106px;font:11px/20px 'Liberation Sans',sans-serif;color:#4a4f54;transform:scaleX(1.1065);-webkit-text-stroke:.4px #4a4f54;">Settings</span>
<svg style="left:846px;top:114.1px;" width="8.3" height="4.2" viewBox="8 192 304 169" preserveAspectRatio="none"><path fill="#444" d="M31.3 192h257.300c17.800 0 26.700 21.500 14.100 34.100L174.100 354.800c-7.800 7.800-20.500 7.800-28.300 0L17.200 226.100C4.600 213.500 13.500 192 31.300 192z"/></svg>
<div style="left:99px;top:139px;width:51px;height:400px;background:#f0f0f0"></div>
<div style="left:99px;top:139px;width:51px;height:16.09px;background:#dcdcdc"></div>
<div style="left:150px;top:139px;width:820px;height:16.09px;background:#ebebeb"></div>
<div style="left:841px;top:139px;width:1px;height:400px;background:#e0e0e0"></div>
<div style="left:154.2px;top:139px;width:1.6px;height:16.09px;background:#9a9a9a"></div>
<span class="t" style="left:127.90px;top:139px;font:12.7292px/20px 'Liberation Mono',monospace;color:#333;transform:scaleX(1.1260);-webkit-text-stroke:.15px #333;">1</span>
<span class="t" style="left:154.20px;top:139px;font:12.7292px/20px 'Liberation Mono',monospace;color:#25852f;transform:scaleX(1.1260);-webkit-text-stroke:.14px #25852f;">*KEYWORD</span>
<span class="t" style="left:127.90px;top:155px;font:12.7292px/20px 'Liberation Mono',monospace;color:#333;transform:scaleX(1.1260);-webkit-text-stroke:.15px #333;">2</span>
<span class="t" style="left:154.20px;top:155px;font:12.7292px/20px 'Liberation Mono',monospace;color:#111;transform:scaleX(1.1260);-webkit-text-stroke:.14px #111;">$&gt;</span>
<span class="t" style="left:127.90px;top:171px;font:12.7292px/20px 'Liberation Mono',monospace;color:#333;transform:scaleX(1.1260);-webkit-text-stroke:.15px #333;">3</span>
<span class="t" style="left:154.20px;top:171px;font:12.7292px/20px 'Liberation Mono',monospace;color:#111;transform:scaleX(1.1260);-webkit-text-stroke:.14px #111;">$&gt; Primer12.0 created on: Wed Dec 16 17:52:22 2015</span>
<span class="t" style="left:127.90px;top:187px;font:12.7292px/20px 'Liberation Mono',monospace;color:#333;transform:scaleX(1.1260);-webkit-text-stroke:.15px #333;">4</span>
<span class="t" style="left:154.20px;top:187px;font:12.7292px/20px 'Liberation Mono',monospace;color:#111;transform:scaleX(1.1260);-webkit-text-stroke:.14px #111;">$&gt;</span>
<span class="t" style="left:127.90px;top:203px;font:12.7292px/20px 'Liberation Mono',monospace;color:#333;transform:scaleX(1.1260);-webkit-text-stroke:.15px #333;">5</span>
<span class="t" style="left:154.20px;top:203px;font:12.7292px/20px 'Liberation Mono',monospace;color:#111;transform:scaleX(1.1260);-webkit-text-stroke:.14px #111;">$&gt; model title: HAT imp rot 1deg</span>
<span class="t" style="left:127.90px;top:219px;font:12.7292px/20px 'Liberation Mono',monospace;color:#333;transform:scaleX(1.1260);-webkit-text-stroke:.15px #333;">6</span>
<span class="t" style="left:154.20px;top:219px;font:12.7292px/20px 'Liberation Mono',monospace;color:#111;transform:scaleX(1.1260);-webkit-text-stroke:.14px #111;">$&gt;</span>
<span class="t" style="left:127.90px;top:235px;font:12.7292px/20px 'Liberation Mono',monospace;color:#333;transform:scaleX(1.1260);-webkit-text-stroke:.15px #333;">7</span>
<span class="t" style="left:154.20px;top:235px;font:12.7292px/20px 'Liberation Mono',monospace;color:#111;transform:scaleX(1.1260);-webkit-text-stroke:.14px #111;">$$ HM_OUTPUT_DECK created 15:41:19 12-16-2015 by HyperMesh Version 11.0.0.132</span>
<span class="t" style="left:127.90px;top:251px;font:12.7292px/20px 'Liberation Mono',monospace;color:#333;transform:scaleX(1.1260);-webkit-text-stroke:.15px #333;">8</span>
<span class="t" style="left:154.20px;top:251px;font:12.7292px/20px 'Liberation Mono',monospace;color:#111;transform:scaleX(1.1260);-webkit-text-stroke:.14px #111;">$$ Ls-dyna Input Deck Generated by HyperMesh Version  : 11.0.0.132-HWDesktop</span>
<span class="t" style="left:127.90px;top:267px;font:12.7292px/20px 'Liberation Mono',monospace;color:#333;transform:scaleX(1.1260);-webkit-text-stroke:.15px #333;">9</span>
<span class="t" style="left:154.20px;top:267px;font:12.7292px/20px 'Liberation Mono',monospace;color:#111;transform:scaleX(1.1260);-webkit-text-stroke:.14px #111;">$$ Generated using HyperMesh-Ls-dyna 971 Template Version : HW11.0.132-HWDesktop</span>
<span class="t" style="left:119.30px;top:283px;font:12.7292px/20px 'Liberation Mono',monospace;color:#333;transform:scaleX(1.1260);-webkit-text-stroke:.15px #333;">10</span>
<span class="t" style="left:154.20px;top:283px;font:12.7292px/20px 'Liberation Mono',monospace;color:#111;transform:scaleX(1.1260);-webkit-text-stroke:.14px #111;">$&gt; end_saved_comments</span>
<span class="t" style="left:119.30px;top:299px;font:12.7292px/20px 'Liberation Mono',monospace;color:#333;transform:scaleX(1.1260);-webkit-text-stroke:.15px #333;">11</span>
<span class="t" style="left:154.20px;top:299px;font:12.7292px/20px 'Liberation Mono',monospace;color:#111;transform:scaleX(1.1260);-webkit-text-stroke:.14px #111;">$</span>
<span class="t" style="left:119.30px;top:315px;font:12.7292px/20px 'Liberation Mono',monospace;color:#333;transform:scaleX(1.1260);-webkit-text-stroke:.15px #333;">12</span>
<span class="t" style="left:154.20px;top:315px;font:12.7292px/20px 'Liberation Mono',monospace;color:#111;transform:scaleX(1.1260);-webkit-text-stroke:.14px #111;">$</span>
<span class="t" style="left:119.30px;top:331px;font:12.7292px/20px 'Liberation Mono',monospace;color:#333;transform:scaleX(1.1260);-webkit-text-stroke:.15px #333;">13</span>
<span class="t" style="left:154.20px;top:331px;font:12.7292px/20px 'Liberation Mono',monospace;color:#25852f;transform:scaleX(1.1260);-webkit-text-stroke:.14px #25852f;">*TITLE</span>
<span class="t" style="left:119.30px;top:347px;font:12.7292px/20px 'Liberation Mono',monospace;color:#333;transform:scaleX(1.1260);-webkit-text-stroke:.15px #333;">14</span>
<span class="t" style="left:154.20px;top:347px;font:12.7292px/20px 'Liberation Mono',monospace;color:#111;transform:scaleX(1.1260);-webkit-text-stroke:.14px #111;">HAT imp rot 1deg</span>
<span class="t" style="left:119.30px;top:364px;font:12.7292px/20px 'Liberation Mono',monospace;color:#333;transform:scaleX(1.1260);-webkit-text-stroke:.15px #333;">15</span>
<span class="t" style="left:154.20px;top:364px;font:12.7292px/20px 'Liberation Mono',monospace;color:#111;transform:scaleX(1.1260);-webkit-text-stroke:.14px #111;">$</span>
<span class="t" style="left:119.30px;top:380px;font:12.7292px/20px 'Liberation Mono',monospace;color:#333;transform:scaleX(1.1260);-webkit-text-stroke:.15px #333;">16</span>
<span class="t" style="left:154.20px;top:380px;font:12.7292px/20px 'Liberation Mono',monospace;color:#111;transform:scaleX(1.1260);-webkit-text-stroke:.14px #111;">$</span>
<span class="t" style="left:119.30px;top:396px;font:12.7292px/20px 'Liberation Mono',monospace;color:#333;transform:scaleX(1.1260);-webkit-text-stroke:.15px #333;">17</span>
<span class="t" style="left:154.20px;top:396px;font:12.7292px/20px 'Liberation Mono',monospace;color:#111;transform:scaleX(1.1260);-webkit-text-stroke:.14px #111;">$</span>
<span class="t" style="left:119.30px;top:412px;font:12.7292px/20px 'Liberation Mono',monospace;color:#333;transform:scaleX(1.1260);-webkit-text-stroke:.15px #333;">18</span>
<span class="t" style="left:154.20px;top:412px;font:12.7292px/20px 'Liberation Mono',monospace;color:#111;transform:scaleX(1.1260);-webkit-text-stroke:.14px #111;">$ ===============</span>
<span class="t" style="left:119.30px;top:428px;font:12.7292px/20px 'Liberation Mono',monospace;color:#333;transform:scaleX(1.1260);-webkit-text-stroke:.15px #333;">19</span>
<span class="t" style="left:154.20px;top:428px;font:12.7292px/20px 'Liberation Mono',monospace;color:#111;transform:scaleX(1.1260);-webkit-text-stroke:.14px #111;">$ PARAMETER cards</span>
<span class="t" style="left:119.30px;top:444px;font:12.7292px/20px 'Liberation Mono',monospace;color:#333;transform:scaleX(1.1260);-webkit-text-stroke:.15px #333;">20</span>
<span class="t" style="left:154.20px;top:444px;font:12.7292px/20px 'Liberation Mono',monospace;color:#111;transform:scaleX(1.1260);-webkit-text-stroke:.14px #111;">$ ===============</span>
<span class="t" style="left:119.30px;top:460px;font:12.7292px/20px 'Liberation Mono',monospace;color:#333;transform:scaleX(1.1260);-webkit-text-stroke:.15px #333;">21</span>
<span class="t" style="left:154.20px;top:460px;font:12.7292px/20px 'Liberation Mono',monospace;color:#111;transform:scaleX(1.1260);-webkit-text-stroke:.14px #111;">$</span>
<span class="t" style="left:119.30px;top:476px;font:12.7292px/20px 'Liberation Mono',monospace;color:#333;transform:scaleX(1.1260);-webkit-text-stroke:.15px #333;">22</span>
<span class="t" style="left:154.20px;top:476px;font:12.7292px/20px 'Liberation Mono',monospace;color:#25852f;transform:scaleX(1.1260);-webkit-text-stroke:.14px #25852f;">*PARAMETER_EXPRESSION</span>
<span class="t" style="left:119.30px;top:492px;font:12.7292px/20px 'Liberation Mono',monospace;color:#333;transform:scaleX(1.1260);-webkit-text-stroke:.15px #333;">23</span>
<span class="t" style="left:154.20px;top:492px;font:12.7292px/20px 'Liberation Mono',monospace;color:#111;transform:scaleX(1.1260);-webkit-text-stroke:.14px #111;">R INIVEL  -56.*1.0e6/60./60.</span>
<div style="left:69px;top:2px;width:414px;height:48px;border:4px solid #fb7c24"></div>
</div>
</body></html>
